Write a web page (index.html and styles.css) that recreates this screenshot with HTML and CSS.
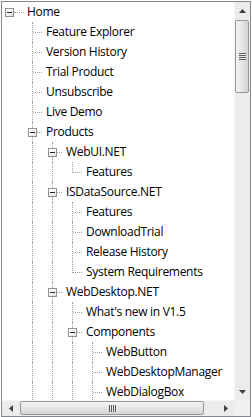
FILE: index.html
```html
<!DOCTYPE html>
<html lang="en">
<head>
    <meta charset="UTF-8">
    <title>Tree View</title>
    <link rel="stylesheet" href="styles.css">
</head>
<body>

    <div class="tree">
        <div class="view">
            <div class="row root"><span class="c home"><span class="box"></span></span><span class="label">Home</span></div>
            <div class="row"><span class="c tee"></span><span class="label">Feature Explorer</span></div>
            <div class="row"><span class="c tee"></span><span class="label">Version History</span></div>
            <div class="row"><span class="c tee"></span><span class="label">Trial Product</span></div>
            <div class="row"><span class="c tee"></span><span class="label">Unsubscribe</span></div>
            <div class="row"><span class="c tee"></span><span class="label">Live Demo</span></div>
            <div class="row"><span class="c tee"><span class="box"></span></span><span class="label">Products</span></div>
            <div class="row"><span class="c pipe"></span><span class="c tee"><span class="box"></span></span><span class="label">WebUI.NET</span></div>
            <div class="row"><span class="c pipe"></span><span class="c pipe"></span><span class="c last"></span><span class="label">Features</span></div>
            <div class="row"><span class="c pipe"></span><span class="c tee"><span class="box"></span></span><span class="label">ISDataSource.NET</span></div>
            <div class="row"><span class="c pipe"></span><span class="c pipe"></span><span class="c tee"></span><span class="label">Features</span></div>
            <div class="row"><span class="c pipe"></span><span class="c pipe"></span><span class="c tee"></span><span class="label">DownloadTrial</span></div>
            <div class="row"><span class="c pipe"></span><span class="c pipe"></span><span class="c tee"></span><span class="label">Release History</span></div>
            <div class="row"><span class="c pipe"></span><span class="c pipe"></span><span class="c last"></span><span class="label">System Requirements</span></div>
            <div class="row"><span class="c pipe"></span><span class="c tee"><span class="box"></span></span><span class="label">WebDesktop.NET</span></div>
            <div class="row"><span class="c pipe"></span><span class="c pipe"></span><span class="c tee"></span><span class="label">What's new in V1.5</span></div>
            <div class="row"><span class="c pipe"></span><span class="c pipe"></span><span class="c tee"><span class="box"></span></span><span class="label">Components</span></div>
            <div class="row"><span class="c pipe"></span><span class="c pipe"></span><span class="c pipe"></span><span class="c tee"></span><span class="label">WebButton</span></div>
            <div class="row"><span class="c pipe"></span><span class="c pipe"></span><span class="c pipe"></span><span class="c tee"></span><span class="label">WebDesktopManager</span></div>
            <div class="row"><span class="c pipe"></span><span class="c pipe"></span><span class="c pipe"></span><span class="c tee"></span><span class="label">WebDialogBox</span></div>
        </div>

        <div class="vscroll">
            <div class="btn"><svg width="7" height="4" viewBox="0 0 7 4"><polygon points="0,4 7,4 3.5,0" fill="#404040"/></svg></div>
            <div class="track vtrack"><div class="thumb vthumb"><span class="grip"></span></div></div>
            <div class="btn"><svg width="7" height="4" viewBox="0 0 7 4"><polygon points="0,0 7,0 3.5,4" fill="#404040"/></svg></div>
        </div>

        <div class="hscroll">
            <div class="btn"><svg width="4" height="7" viewBox="0 0 4 7"><polygon points="4,0 4,7 0,3.5" fill="#404040"/></svg></div>
            <div class="track htrack"><div class="thumb hthumb"><span class="grip"></span></div></div>
            <div class="btn"><svg width="4" height="7" viewBox="0 0 4 7"><polygon points="0,0 0,7 4,3.5" fill="#404040"/></svg></div>
        </div>

        <div class="corner"></div>
    </div>

</body>
</html>
```

FILE: styles.css
```css
body { margin: 1px; background: #fff; font-family: "Open Sans", "Liberation Sans", sans-serif; font-size: 12px; color: #000; }

.tree { width: 250px; height: 416px; box-sizing: border-box; border: 1px solid #828790; display: grid; grid-template-columns: 1fr 16px; grid-template-rows: 1fr 16px; background: #fff; }
.view { overflow: hidden; min-width: 0; min-height: 0; }

.row { display: flex; align-items: center; height: 20px; padding-left: 20px; white-space: nowrap; }
.row.root { padding-left: 0; }
.label { margin-left: 4px; line-height: 20px; letter-spacing: -0.3px; }
.root .label { margin-left: 3px; }

/* guide cells */
.c { position: relative; flex: none; width: 20px; height: 20px; }
.c::before, .c::after { content: ""; position: absolute; }
.pipe::before, .tee::before { left: 10px; top: 0; bottom: 0; border-left: 1px dotted #a0a0a0; }
.last::before { left: 10px; top: 0; height: 11px; border-left: 1px dotted #a0a0a0; }
.tee::after, .last::after { left: 11px; top: 10px; width: 9px; border-top: 1px dotted #a0a0a0; }

.home { width: 22px; }
.home::after { left: 12px; top: 10px; width: 10px; border-top: 1px dotted #a0a0a0; }
.home .box { left: 3px; }

/* expander */
.box { position: absolute; left: 6px; top: 6px; width: 9px; height: 9px; box-sizing: border-box; border: 1px solid #919191; background: linear-gradient(135deg, #fff 30%, #dcdcdc); z-index: 1; }
.box::before { content: ""; position: absolute; left: 1px; top: 3px; width: 5px; height: 1px; background: #222; }

/* scrollbars */
.vscroll { display: flex; flex-direction: column; background: #ececec; border-left: 1px solid #f6f6f6; }
.hscroll { display: flex; background: #ececec; border-top: 1px solid #f6f6f6; }
.corner { background: #f0f0f0; }
.btn { flex: none; display: flex; align-items: center; justify-content: center; }
.vscroll .btn { height: 17px; }
.hscroll .btn { width: 17px; }
.track { flex: 1; display: flex; }
.vtrack { flex-direction: column; padding-top: 1px; }
.htrack { padding-left: 1px; }

.thumb { box-sizing: border-box; border: 1px solid #979797; border-radius: 2px; display: flex; align-items: center; justify-content: center; }
.vthumb { height: 73px; margin: 0 1px 0 0; background: linear-gradient(to right, #f4f4f4, #e6e6e6 45%, #d4d4d4); }
.hthumb { width: 184px; margin: 0 0 1px 0; background: linear-gradient(to bottom, #f4f4f4, #e6e6e6 45%, #d4d4d4); }

.vthumb .grip { width: 7px; height: 7px; background: repeating-linear-gradient(to bottom, #5c5c5c 0 1px, #e8e8e8 1px 2px); }
.hthumb .grip { width: 7px; height: 7px; background: repeating-linear-gradient(to right, #5c5c5c 0 1px, #e8e8e8 1px 2px); }
```
